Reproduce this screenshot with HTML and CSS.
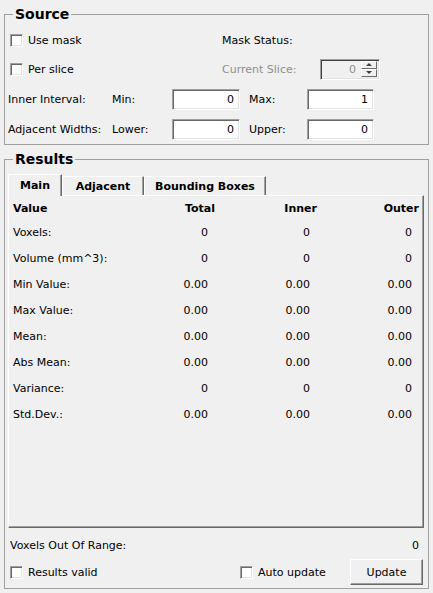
FILE: index.html
```html
<!DOCTYPE html>
<html>
<head>
<meta charset="utf-8">
<link rel="stylesheet" href="styles.css">
</head>
<body>
<fieldset class="group source">
  <legend>Source</legend>
  <div class="row r1">
    <label class="check left"><input type="checkbox"><span>Use mask</span></label>
    <span class="lbl">Mask Status:</span>
  </div>
  <div class="row r2">
    <label class="check left"><input type="checkbox"><span>Per slice</span></label>
    <span class="lbl dis slice-lbl">Current Slice:</span>
    <div class="spin">
      <span class="spin-val">0</span>
      <div class="spin-btns">
        <span class="sb"><span class="tri up"></span></span>
        <span class="sb"><span class="tri down"></span></span>
      </div>
    </div>
  </div>
  <div class="row r3">
    <span class="lbl c1">Inner Interval:</span>
    <span class="lbl c2">Min:</span>
    <input class="num w1" type="text" value="0">
    <span class="lbl c4">Max:</span>
    <input class="num w2" type="text" value="1">
  </div>
  <div class="row r4">
    <span class="lbl c1">Adjacent Widths:</span>
    <span class="lbl c2">Lower:</span>
    <input class="num w1" type="text" value="0">
    <span class="lbl c4">Upper:</span>
    <input class="num w2" type="text" value="0">
  </div>
</fieldset>

<fieldset class="group results">
  <legend>Results</legend>
  <div class="tabs">
    <span class="tab sel t-main">Main</span>
    <span class="tab t-adj">Adjacent</span>
    <span class="tab t-bb">Bounding Boxes</span>
  </div>
  <div class="pane">
    <div class="table">
      <div class="th hl">Value</div><div class="th">Total</div><div class="th">Inner</div><div class="th">Outer</div>
      <div class="td hl">Voxels:</div><div class="td">0</div><div class="td">0</div><div class="td">0</div>
      <div class="td hl">Volume (mm^3):</div><div class="td">0</div><div class="td">0</div><div class="td">0</div>
      <div class="td hl">Min Value:</div><div class="td">0.00</div><div class="td">0.00</div><div class="td">0.00</div>
      <div class="td hl">Max Value:</div><div class="td">0.00</div><div class="td">0.00</div><div class="td">0.00</div>
      <div class="td hl">Mean:</div><div class="td">0.00</div><div class="td">0.00</div><div class="td">0.00</div>
      <div class="td hl">Abs Mean:</div><div class="td">0.00</div><div class="td">0.00</div><div class="td">0.00</div>
      <div class="td hl">Variance:</div><div class="td">0</div><div class="td">0</div><div class="td">0</div>
      <div class="td hl">Std.Dev.:</div><div class="td">0.00</div><div class="td">0.00</div><div class="td">0.00</div>
    </div>
  </div>
  <div class="vout">
    <span>Voxels Out Of Range:</span>
    <span>0</span>
  </div>
  <div class="bottom">
    <label class="check bleft"><input type="checkbox"><span>Results valid</span></label>
    <label class="check bmid"><input type="checkbox"><span>Auto update</span></label>
    <button class="btn" type="button">Update</button>
  </div>
</fieldset>
</body>
</html>
```

FILE: styles.css
```css
* { box-sizing: border-box; }

html, body {
  margin: 0;
  height: 100%;
}

body {
  background: #f0f0f0;
  font: 11px/13px "DejaVu Sans", sans-serif;
  color: #000;
  padding: 5px 4px 0 4px;
  overflow: hidden;
}

.group {
  margin: 0;
  min-width: 0;
  border: 1px solid #a0a0a0;
  padding: 3px 0 0 0;
}

.group legend {
  margin-left: 8px;
  padding: 0 2px;
  font: bold 14px/18px "DejaVu Sans", sans-serif;
}

.results {
  margin-top: 5px;
  padding: 6px 0 3px 0;
}

.row {
  display: flex;
  align-items: center;
}

.r1 { height: 28px; }
.r2, .r3, .r4 { height: 30px; }

.check {
  display: flex;
  align-items: center;
  gap: 5px;
}

.check input {
  appearance: none;
  -webkit-appearance: none;
  margin: 0;
  width: 13px;
  height: 13px;
  background: #fff;
  border-top: 1px solid #a0a0a0;
  border-left: 1px solid #a0a0a0;
  border-right: 1px solid #fff;
  border-bottom: 1px solid #fff;
  box-shadow: inset 1px 1px 0 #696969, inset -1px -1px 0 #e3e3e3;
  flex: none;
}

.left {
  width: 217px;
  padding-left: 5px;
}

.lbl { white-space: nowrap; }

.dis { color: #8f8f8f; }

.slice-lbl { width: 98px; }

.spin {
  width: 60px;
  height: 21px;
  display: flex;
  align-items: center;
  justify-content: flex-end;
  background: #f0f0f0;
  border-top: 1px solid #a0a0a0;
  border-left: 1px solid #a0a0a0;
  border-right: 1px solid #fff;
  border-bottom: 1px solid #fff;
  box-shadow: inset 1px 1px 0 #404040, inset -1px -1px 0 #e3e3e3;
  padding: 0 2px 0 0;
}

.spin-val {
  color: #8f8f8f;
  padding-right: 5px;
}

.spin-btns {
  display: flex;
  flex-direction: column;
  align-self: flex-start;
  margin-top: 1px;
}

.sb {
  width: 16px;
  height: 8px;
  display: flex;
  align-items: center;
  justify-content: center;
  background: #f0f0f0;
  border-top: 1px solid #fff;
  border-left: 1px solid #fff;
  border-right: 1px solid #696969;
  border-bottom: 1px solid #696969;
}

.tri {
  width: 0;
  height: 0;
  border-left: 3px solid transparent;
  border-right: 3px solid transparent;
}

.tri.up { border-bottom: 3px solid #404040; }
.tri.down { border-top: 3px solid #404040; }

.c1 { width: 107px; padding-left: 3px; }
.c2 { width: 60px; }
.c4 { width: 67px; padding-left: 9px; }

.num {
  appearance: none;
  -webkit-appearance: none;
  height: 21px;
  margin: 0;
  font: 11px/13px "DejaVu Sans", sans-serif;
  color: #000;
  text-align: right;
  padding: 0 5px 0 0;
  background: #fff;
  border-top: 1px solid #a0a0a0;
  border-left: 1px solid #a0a0a0;
  border-right: 1px solid #fff;
  border-bottom: 1px solid #fff;
  box-shadow: inset 1px 1px 0 #696969, inset -1px -1px 0 #e3e3e3;
  outline: none;
}

.w1 { width: 68px; }
.w2 { width: 67px; }

.tabs {
  display: flex;
  align-items: flex-end;
  height: 21px;
  margin-left: 3px;
}

.tab {
  height: 19px;
  display: flex;
  align-items: center;
  justify-content: center;
  font-weight: bold;
  border-top: 1px solid #fff;
  border-left: 1px solid #fff;
  border-right: 1px solid #696969;
  box-shadow: inset -1px 0 0 #a0a0a0;
  white-space: nowrap;
}

.t-main { width: 54px; }
.t-adj { width: 82px; }
.t-bb { width: 122px; }

.tab.sel {
  height: 22px;
  margin-bottom: -1px;
  padding-bottom: 1px;
  background: #f0f0f0;
  position: relative;
  z-index: 1;
}

.pane {
  margin: 0 4px 0 3px;
  height: 333px;
  border-top: 1px solid #fff;
  border-left: 1px solid #fff;
  border-right: 1px solid #696969;
  border-bottom: 1px solid #696969;
  box-shadow: inset -1px -1px 0 #a0a0a0;
  padding: 1px 0 0 4px;
}

.table {
  display: grid;
  grid-template-columns: 100px 102px 102px 102px;
  grid-template-rows: 22px;
  grid-auto-rows: 26px;
  align-items: center;
}

.th {
  font-weight: bold;
  text-align: right;
}

.td {
  text-align: right;
  padding-right: 7px;
}

.th.hl, .td.hl {
  text-align: left;
  padding-right: 0;
  white-space: nowrap;
}

.vout {
  display: flex;
  justify-content: space-between;
  align-items: center;
  height: 26px;
  margin-top: 4px;
  padding: 0 9px 0 5px;
}

.bottom {
  display: flex;
  align-items: center;
  height: 26px;
  margin-top: 1px;
}

.bleft {
  width: 235px;
  padding-left: 5px;
}

.bmid {
  width: 110px;
}

.btn {
  width: 73px;
  height: 26px;
  margin: 0;
  padding: 0;
  font: 11px/13px "DejaVu Sans", sans-serif;
  color: #000;
  background: #f0f0f0;
  border-top: 1px solid #fff;
  border-left: 1px solid #fff;
  border-right: 1px solid #696969;
  border-bottom: 1px solid #696969;
  box-shadow: inset -1px -1px 0 #a0a0a0;
}
```
